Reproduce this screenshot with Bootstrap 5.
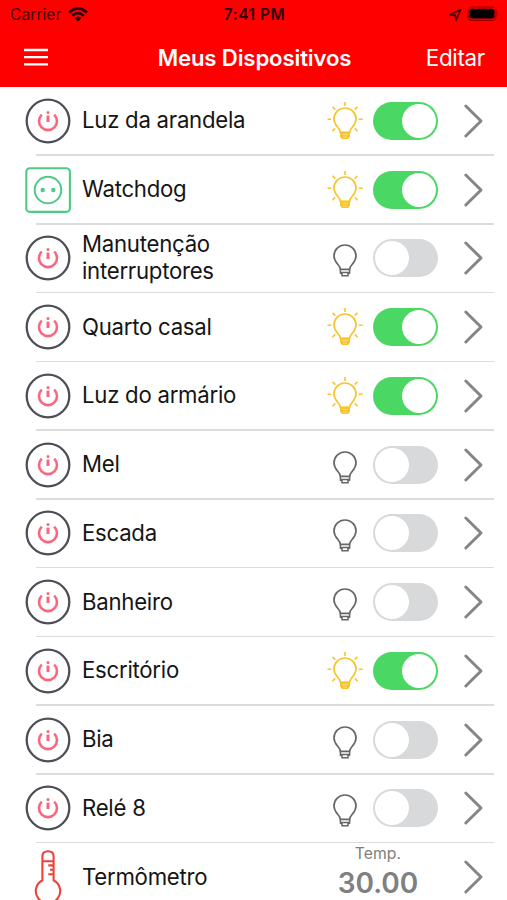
<!DOCTYPE html>
<html lang="pt-BR">
<head>
<meta charset="utf-8">
<meta name="viewport" content="width=device-width, initial-scale=1">
<title>Meus Dispositivos</title>
<link href="https://cdn.jsdelivr.net/npm/bootstrap@5.3.0/dist/css/bootstrap.min.css" rel="stylesheet">
<style>
  body { font-family: Inter, "Liberation Sans", sans-serif; color: #151515; background: #fff; height: 900px; overflow: hidden; }
  svg { display: block; flex: none; overflow: visible; }
  symbol { overflow: visible; }
  .app-head { background: #fe0000; height: 87px; }
  .status-line { height: 30px; padding: 0 8px 0 10px; color: #400000; font-size: 15.7px; }
  .status-line > *, .title-line > * { flex: 1 1 0; white-space: nowrap; }
  .wifi { margin-left: 7px; }
  .clock { font-weight: 600; font-size: 15.4px; letter-spacing: .55px; color: #300000; }
  .title-line { height: 56px; padding: 0 22px 0 24px; color: #fff; font-size: 22.4px; letter-spacing: -.3px; }
  .title-line h1 { font-size: 22.2px; font-weight: 600; flex: none; letter-spacing: -.15px; }
  .device { height: 68.75px; padding: 0 24px 1px 26px; position: relative; }
  .device::after { content: ""; position: absolute; left: 36px; right: 13px; bottom: 0; height: 1.5px; background: #dcdcdd; }
  .device-name { font-size: 22.2px; line-height: 27px; margin-left: 12px; width: 220px; letter-spacing: -.26px; padding-bottom: 2px; }
  .lamp { margin-right: 10px; }
  .toggle { width: 65px; height: 38px; border-radius: 19px; background: #d7d9da; padding: 2px; margin-right: 26px; flex: none; }
  .toggle.on { background: #4bd763; justify-content: flex-end; }
  .toggle i { width: 34px; height: 34px; border-radius: 50%; background: #fff; }
  .reading { color: #808080; width: 90px; margin-right: 41px; padding-bottom: 8px; }
  .reading small { font-size: 15.7px; line-height: 20px; letter-spacing: .1px; }
  .reading b { font-size: 28px; line-height: 38px; font-weight: 600; letter-spacing: -.05px; }
</style>
</head>
<body>
<svg width="0" height="0" class="position-absolute" aria-hidden="true">
  <symbol id="power" viewBox="0 0 44 44">
    <circle cx="22" cy="22" r="21.3" fill="#fff" stroke="#4c4f56" stroke-width="2.3"/>
    <path d="M15.8 15.6A9 9 0 1 0 28.2 15.6" fill="none" stroke="#f8677d" stroke-width="2.6"/>
    <path d="M22 16.6V23" stroke="#f8677d" stroke-width="3"/><circle cx="22" cy="13.6" r="1.5" fill="#f8677d"/>
  </symbol>
  <symbol id="outlet" viewBox="0 0 44 44">
    <rect x="0.3" y="0.3" width="43.6" height="43.6" rx="3.5" fill="#fff" stroke="#4dcb84" stroke-width="2.1"/>
    <circle cx="22" cy="22" r="13.3" fill="none" stroke="#4dcb84" stroke-width="2"/>
    <circle cx="16.7" cy="22" r="2.2" fill="#4dcb84"/><circle cx="27.3" cy="22" r="2.2" fill="#4dcb84"/>
  </symbol>
  <symbol id="bulb" viewBox="0 0 36 38">
    <path d="M13.4 30.4C13.4 25.8 7 24.2 7 17a11 11 0 0 1 22 0C29 24.2 22.6 25.8 22.6 30.4Z" fill="#fff" stroke="currentColor" stroke-width="1.7"/>
    <path d="M13.4 30.4V34.2L15 34.8V36.7H21V34.8L22.6 34.2V30.4M13.4 33.4H22.6" fill="none" stroke="currentColor" stroke-width="1.5"/>
  </symbol>
  <symbol id="bulb-on" viewBox="0 0 36 38">
    <path d="M13.4 30.4C13.4 25.8 7 24.2 7 17a11 11 0 0 1 22 0C29 24.2 22.6 25.8 22.6 30.4Z" fill="#fff" stroke="currentColor" stroke-width="1.7"/>
    <path d="M13 29.8H23V34.6L21.2 37H14.8L13 34.6Z" fill="currentColor"/>
    <path d="M15 32.4H21M16 35H20" stroke="#fff" stroke-opacity=".5" stroke-width=".8"/>
    <path d="M18 0V4M.5 17.2H4.3M31.7 17.2H35.7M5.6 4.9L8.3 7.6M30.4 4.9L27.7 7.6M5.4 29.2L8.2 26.4M30.6 29.2L27.8 26.4" stroke="currentColor" stroke-width="1.6"/>
  </symbol>
  <symbol id="chevron" viewBox="0 0 19 34">
    <path d="M1.8 2L17 17L1.8 32" fill="none" stroke="#858585" stroke-width="3" stroke-linecap="round" stroke-linejoin="round"/>
  </symbol>
</svg>

<header class="app-head">
  <div class="status-line d-flex align-items-center">
    <div class="d-flex align-items-center"><span>Carrier</span>
      <svg class="wifi" width="20" height="15" viewBox="0 0 20 15" fill="none" stroke="#300000" stroke-width="2.7"><path d="M1 5.4Q10-2.5 19 5.4M4.2 8.7Q10 3.4 15.8 8.7"/><path d="M6.7 11.1Q10 8 13.3 11.1L10 14.5Z" fill="#300000" stroke="none"/></svg>
    </div>
    <div class="clock text-center">7:41 PM</div>
    <div class="d-flex align-items-center justify-content-end">
      <svg width="13" height="13" viewBox="0 0 13 13"><path d="M1 5.6L11.8 .7L7 11.3L6.3 6.2Z" fill="none" stroke="#500000" stroke-width="1.7" stroke-linejoin="round"/></svg>
      <svg class="ms-1" width="33" height="16" viewBox="0 0 33 16"><rect x="2" y="0" width="28" height="13.4" rx="4" fill="none" stroke="#9c0000" stroke-width="1.2"/><rect x="3.5" y="1.8" width="25" height="9.8" rx="2.4"/><path d="M31.5 4.7Q33.2 6.7 31.5 8.7Z" fill="#9c0000"/></svg>
    </div>
  </div>
  <div class="title-line d-flex align-items-center">
    <div><svg width="24" height="18" viewBox="0 0 24 18" stroke="#fff" stroke-width="2.3"><path d="M0 1H24M0 8.2H24M0 15.4H24"/></svg></div>
    <h1 class="m-0">Meus Dispositivos</h1>
    <div class="text-end">Editar</div>
  </div>
</header>

<main>
  <div class="device d-flex align-items-center"><svg width="44" height="44"><use href="#power"/></svg><div class="device-name">Luz da arandela</div><svg class="lamp ms-auto" width="36" height="38" color="#f8c52d"><use href="#bulb-on"/></svg><div class="toggle on d-flex"><i></i></div><svg width="19" height="34"><use href="#chevron"/></svg></div>
  <div class="device d-flex align-items-center"><svg width="44" height="44"><use href="#outlet"/></svg><div class="device-name">Watchdog</div><svg class="lamp ms-auto" width="36" height="38" color="#f8c52d"><use href="#bulb-on"/></svg><div class="toggle on d-flex"><i></i></div><svg width="19" height="34"><use href="#chevron"/></svg></div>
  <div class="device d-flex align-items-center"><svg width="44" height="44"><use href="#power"/></svg><div class="device-name">Manutenção<br>interruptores</div><svg class="lamp ms-auto" width="36" height="38" color="#67676a"><use href="#bulb"/></svg><div class="toggle d-flex"><i></i></div><svg width="19" height="34"><use href="#chevron"/></svg></div>
  <div class="device d-flex align-items-center"><svg width="44" height="44"><use href="#power"/></svg><div class="device-name">Quarto casal</div><svg class="lamp ms-auto" width="36" height="38" color="#f8c52d"><use href="#bulb-on"/></svg><div class="toggle on d-flex"><i></i></div><svg width="19" height="34"><use href="#chevron"/></svg></div>
  <div class="device d-flex align-items-center"><svg width="44" height="44"><use href="#power"/></svg><div class="device-name">Luz do armário</div><svg class="lamp ms-auto" width="36" height="38" color="#f8c52d"><use href="#bulb-on"/></svg><div class="toggle on d-flex"><i></i></div><svg width="19" height="34"><use href="#chevron"/></svg></div>
  <div class="device d-flex align-items-center"><svg width="44" height="44"><use href="#power"/></svg><div class="device-name">Mel</div><svg class="lamp ms-auto" width="36" height="38" color="#67676a"><use href="#bulb"/></svg><div class="toggle d-flex"><i></i></div><svg width="19" height="34"><use href="#chevron"/></svg></div>
  <div class="device d-flex align-items-center"><svg width="44" height="44"><use href="#power"/></svg><div class="device-name">Escada</div><svg class="lamp ms-auto" width="36" height="38" color="#67676a"><use href="#bulb"/></svg><div class="toggle d-flex"><i></i></div><svg width="19" height="34"><use href="#chevron"/></svg></div>
  <div class="device d-flex align-items-center"><svg width="44" height="44"><use href="#power"/></svg><div class="device-name">Banheiro</div><svg class="lamp ms-auto" width="36" height="38" color="#67676a"><use href="#bulb"/></svg><div class="toggle d-flex"><i></i></div><svg width="19" height="34"><use href="#chevron"/></svg></div>
  <div class="device d-flex align-items-center"><svg width="44" height="44"><use href="#power"/></svg><div class="device-name">Escritório</div><svg class="lamp ms-auto" width="36" height="38" color="#f8c52d"><use href="#bulb-on"/></svg><div class="toggle on d-flex"><i></i></div><svg width="19" height="34"><use href="#chevron"/></svg></div>
  <div class="device d-flex align-items-center"><svg width="44" height="44"><use href="#power"/></svg><div class="device-name">Bia</div><svg class="lamp ms-auto" width="36" height="38" color="#67676a"><use href="#bulb"/></svg><div class="toggle d-flex"><i></i></div><svg width="19" height="34"><use href="#chevron"/></svg></div>
  <div class="device d-flex align-items-center"><svg width="44" height="44"><use href="#power"/></svg><div class="device-name">Relé 8</div><svg class="lamp ms-auto" width="36" height="38" color="#67676a"><use href="#bulb"/></svg><div class="toggle d-flex"><i></i></div><svg width="19" height="34"><use href="#chevron"/></svg></div>
  <div class="device d-flex align-items-center">
    <svg width="44" height="56" viewBox="0 0 44 56" fill="none" stroke="#ee4238" stroke-width="2.1"><path d="M16.4 31.2V7.5Q16.4 2.2 22 2.2T27.6 7.5V31.2A12.2 12.2 0 1 1 16.4 31.2Z"/><path d="M16.4 12.2H27.6M22.3 16.4H27.6M24 20.8H27.6M22.3 25.2H27.6"/></svg>
    <div class="device-name">Termômetro</div>
    <div class="reading ms-auto d-flex flex-column align-items-center"><small>Temp.</small><b>30.00</b></div>
    <svg width="19" height="34"><use href="#chevron"/></svg>
  </div>
</main>
<script src="https://cdn.jsdelivr.net/npm/bootstrap@5.3.0/dist/js/bootstrap.bundle.min.js"></script>
</body>
</html>
